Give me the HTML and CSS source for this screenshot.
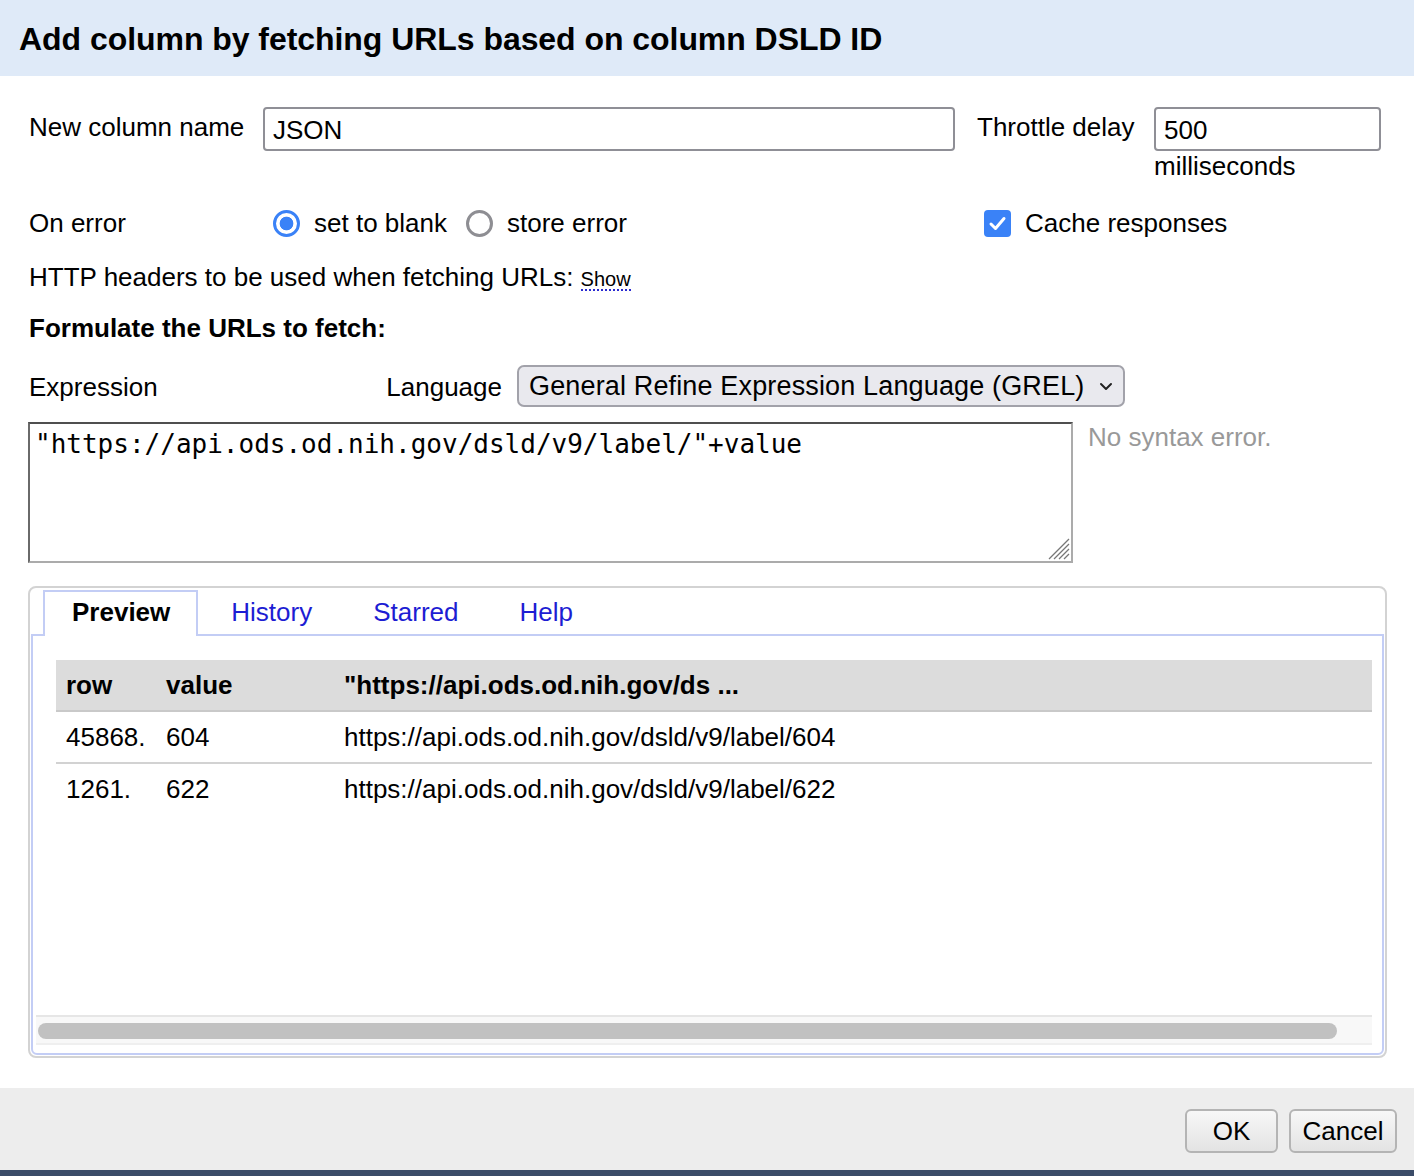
FILE: index.html
```html
<!DOCTYPE html>
<html>
<head>
<meta charset="utf-8">
<link rel="stylesheet" href="styles.css">
</head>
<body>
<div class="dialog">
  <div class="header">Add column by fetching URLs based on column DSLD ID</div>
  <div class="body">
    <div class="grid row1">
      <div class="label tall">New column name</div>
      <div class="input">JSON</div>
      <div class="label tall">Throttle delay</div>
      <div class="throttle">
        <div class="input">500</div>
        <div class="unit">milliseconds</div>
      </div>
    </div>
    <div class="grid row2">
      <div class="label">On error</div>
      <div class="radios">
        <span class="radio on"></span><span class="rlabel">set to blank</span>
        <span class="radio off"></span><span class="rlabel">store error</span>
      </div>
      <div class="check">
        <span class="box"><svg width="27" height="27" viewBox="0 0 27 27"><polyline points="7,14 11.5,18.5 20,8.5" fill="none" stroke="#fff" stroke-width="3" stroke-linecap="round" stroke-linejoin="round"/></svg></span>
        <span class="rlabel">Cache responses</span>
      </div>
    </div>
    <div class="row3">HTTP headers to be used when fetching URLs: <span class="show">Show</span></div>
    <div class="row4">Formulate the URLs to fetch:</div>
    <div class="row5">
      <div class="exprlabels"><span>Expression</span><span>Language</span></div>
      <div class="select">
        <span class="seltext">General Refine Expression Language (GREL)</span>
        <svg width="14" height="9" viewBox="0 0 14 9"><polyline points="2,2 7,7 12,2" fill="none" stroke="#222" stroke-width="2" stroke-linecap="round" stroke-linejoin="round"/></svg>
      </div>
    </div>
    <div class="row6">
      <div class="textarea">
        <span class="code">"https://api.ods.od.nih.gov/dsld/v9/label/"+value</span>
        <svg class="grip" width="26" height="26" viewBox="0 0 26 26">
          <line x1="24" y1="4" x2="4" y2="24" stroke="#777" stroke-width="1.3"/>
          <line x1="24" y1="9" x2="9" y2="24" stroke="#777" stroke-width="1.3"/>
          <line x1="24" y1="14" x2="14" y2="24" stroke="#777" stroke-width="1.3"/>
          <line x1="24" y1="19" x2="19" y2="24" stroke="#777" stroke-width="1.3"/>
        </svg>
      </div>
      <div class="status">No syntax error.</div>
    </div>
    <div class="tabs">
      <div class="tabbar">
        <div class="tab active">Preview</div>
        <div class="tab">History</div>
        <div class="tab">Starred</div>
        <div class="tab">Help</div>
      </div>
      <div class="panel">
        <div class="scroller">
          <table class="preview">
            <tr class="head"><th class="c1">row</th><th class="c2">value</th><th>"https://api.ods.od.nih.gov/ds ...</th></tr>
            <tr class="sep"><td>45868.</td><td>604</td><td>https://api.ods.od.nih.gov/dsld/v9/label/604</td></tr>
            <tr><td>1261.</td><td>622</td><td>https://api.ods.od.nih.gov/dsld/v9/label/622</td></tr>
          </table>
          <div class="track"><div class="thumb"></div></div>
        </div>
      </div>
    </div>
  </div>
  <div class="footer">
    <button class="btn ok">OK</button>
    <button class="btn cancel">Cancel</button>
  </div>
</div>
</body>
</html>
```

FILE: styles.css
```css
html, body {
  margin: 0;
  padding: 0;
  background: #fff;
}
body {
  font-family: "Liberation Sans", Arial, Helvetica, sans-serif;
  font-size: 26px;
  color: #000;
}
.dialog {
  width: 1414px;
  height: 1176px;
  display: flex;
  flex-direction: column;
  box-sizing: border-box;
}
.header {
  height: 76px;
  flex: none;
  background: #dfeaf8;
  font-weight: bold;
  font-size: 32px;
  line-height: 78px;
  padding-left: 19px;
  letter-spacing: -0.05px;
  box-sizing: border-box;
}
.body {
  flex: 1;
  padding: 0 27px 0 29px;
  box-sizing: border-box;
  display: flex;
  flex-direction: column;
}
.grid {
  display: grid;
  grid-template-columns: 234px 692px 22px 177px 227px;
}
.row1 {
  margin-top: 31px;
}
.row1 > :nth-child(3) { grid-column: 4; }
.label {
  line-height: 30px;
}
.label.tall {
  line-height: 40px;
}
.input {
  height: 44px;
  box-sizing: border-box;
  border: 2px solid #8f8f96;
  border-radius: 4px;
  padding: 0 8px;
  line-height: 42px;
  background: #fff;
}
.throttle {
  display: flex;
  flex-direction: column;
}
.unit {
  line-height: 30px;
}
.row2 {
  margin-top: 24px;
  height: 36px;
  align-items: center;
}
.row2 .label { line-height: 36px; }
.radios {
  display: flex;
  align-items: center;
  padding-left: 10px;
}
.radio {
  width: 27px;
  height: 27px;
  box-sizing: border-box;
  border-radius: 50%;
  flex: none;
}
.radio.on {
  border: 3px solid #3a82f7;
  background: radial-gradient(circle, #3a82f7 0 6.5px, #fff 7.2px);
}
.radio.off {
  border: 3px solid #8e8e93;
  background: #fff;
}
.rlabel {
  margin-left: 14px;
  margin-right: 19px;
}
.check {
  grid-column: 4 / span 2;
  display: flex;
  align-items: center;
  padding-left: 7px;
}
.box {
  width: 27px;
  height: 27px;
  border-radius: 4px;
  background: #3a82f7;
  display: block;
  flex: none;
}
.box svg { display: block; }
.row3 {
  margin-top: 21px;
  line-height: 30px;
}
.show {
  font-size: 20px;
  color: #000;
  border-bottom: 2px dotted #2a2ad0;
  line-height: 20px;
  display: inline-block;
}
.row4 {
  margin-top: 21px;
  line-height: 30px;
  font-weight: bold;
}
.row5 {
  margin-top: 22px;
  display: flex;
  align-items: center;
  height: 42px;
}
.exprlabels {
  width: 473px;
  display: flex;
  justify-content: space-between;
  line-height: 42px;
  padding-top: 2px;
}
.select {
  margin-left: 15px;
  width: 608px;
  height: 42px;
  box-sizing: border-box;
  border: 2px solid #a2a2aa;
  border-radius: 7px;
  background: #e9e9ee;
  display: flex;
  align-items: center;
  justify-content: space-between;
  padding: 0 10px 0 10px;
}
.seltext {
  font-size: 27px;
  letter-spacing: 0.15px;
}
.select svg { display: block; }
.row6 {
  margin-top: 15px;
  display: flex;
  align-items: flex-start;
  margin-left: -1px;
}
.textarea {
  position: relative;
  width: 1045px;
  height: 141px;
  box-sizing: border-box;
  border-top: 2px solid #4f4f4f;
  border-left: 2px solid #6a6a6a;
  border-right: 2px solid #ababab;
  border-bottom: 2px solid #ababab;
  padding: 4px 5px;
  background: #fff;
}
.code {
  font-family: "DejaVu Sans Mono", Menlo, monospace;
  font-size: 26px;
  line-height: 32px;
  white-space: pre;
}
.grip {
  position: absolute;
  right: 0;
  bottom: 0;
}
.status {
  margin-left: 15px;
  color: #999;
  line-height: 30px;
}
.tabs {
  margin-top: 23px;
  margin-left: -1px;
  width: 1359px;
  height: 472px;
  box-sizing: border-box;
  border: 2px solid #d3d3d3;
  border-radius: 8px;
  padding: 1px;
  display: flex;
  flex-direction: column;
}
.tabbar {
  display: flex;
  gap: 5px;
  padding: 1px 0 0 13px;
  position: relative;
  z-index: 1;
}
.tab {
  height: 46px;
  box-sizing: border-box;
  padding: 0 26px;
  border: 2px solid transparent;
  border-bottom: 0;
  line-height: 41px;
  color: #1d1dd3;
  margin-bottom: -2px;
}
.tab.active {
  border-color: #c3cdf5;
  background: #fff;
  color: #000;
  font-weight: bold;
  margin-left: -1px;
  padding-left: 27px;
}
.panel {
  flex: 1;
  border: 2px solid #c3cdf5;
  border-radius: 0 0 6px 6px;
  padding: 24px 10px 8px 3px;
  display: flex;
  flex-direction: column;
}
.scroller {
  flex: 1;
  display: flex;
  flex-direction: column;
}
.preview {
  margin-left: 20px;
  width: calc(100% - 20px);
  border-collapse: collapse;
}
.preview th, .preview td {
  text-align: left;
  padding: 0 10px;
  height: 50px;
  white-space: nowrap;
}
.preview .c1 { width: 80px; }
.preview .c2 { width: 158px; }
.preview tr.head {
  background: #dcdcdc;
  border-bottom: 2px solid #c9c9c9;
}
.preview tr.head th { height: 50px; }
.preview tr.sep { border-bottom: 2px solid #d2d2d2; }
.track {
  margin-top: auto;
  height: 30px;
  box-sizing: border-box;
  border-top: 2px solid #e6e6e6;
  border-bottom: 2px solid #efefef;
  background: #f8f8f8;
  padding: 6px 35px 0 2px;
}
.thumb {
  height: 16px;
  border-radius: 8px;
  background: #c1c1c1;
}
.footer {
  height: 88px;
  flex: none;
  box-sizing: border-box;
  background: #ededed;
  border-bottom: 6px solid #3b4c68;
  display: flex;
  justify-content: flex-end;
  align-items: flex-start;
  padding: 21px 17px 0 0;
  gap: 11px;
}
.btn {
  font-family: "Liberation Sans", Arial, sans-serif;
  font-size: 26px;
  height: 44px;
  box-sizing: border-box;
  border: 2px solid #b4b4b4;
  border-radius: 6px;
  background: linear-gradient(#f7f7f7, #e3e3e3);
  color: #000;
  padding: 0;
}
.btn.ok { width: 93px; }
.btn.cancel { width: 108px; }
```
